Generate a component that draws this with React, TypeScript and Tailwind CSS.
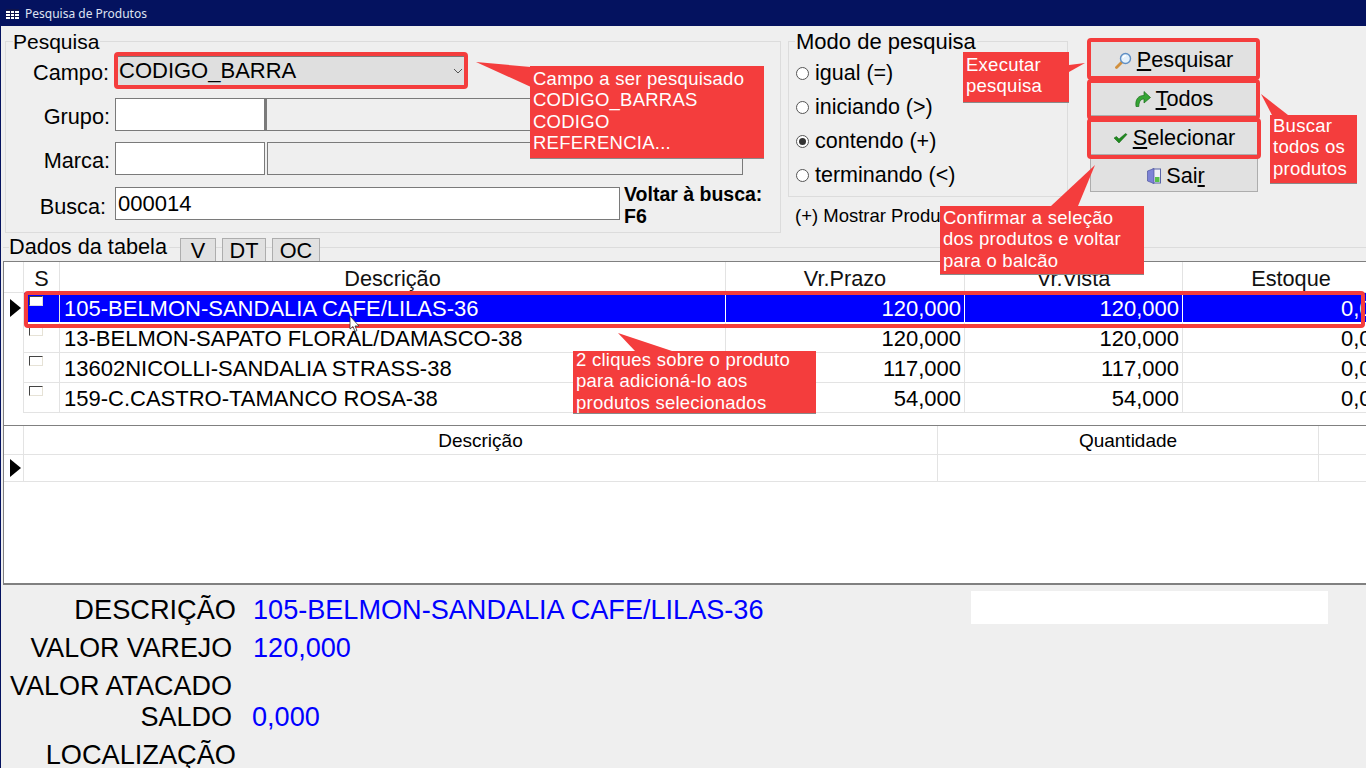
import React from 'react';

const Radio = ({ label, checked }: { label: string; checked?: boolean }) => (
  <div className="flex items-center h-[34px]">
    <span className="w-[13px] h-[13px] rounded-full border border-[#555] bg-white flex items-center justify-center">
      {checked && <span className="w-[7px] h-[7px] rounded-full bg-[#333]" />}
    </span>
    <span className="ml-[6px] text-[21.5px]">{label}</span>
  </div>
);

const ActionButton = ({ icon, children, className = 'h-[36px] pt-[2px]' }: { icon: React.ReactNode; children: React.ReactNode; className?: string }) => (
  <div className={`w-[168px] border border-[#adadad] bg-[#e1e1e1] flex items-center justify-center gap-[5px] text-[21.7px] ${className}`}>
    {icon}
    <span>{children}</span>
  </div>
);

const SearchIcon = () => (
  <svg width="17" height="17" viewBox="0 0 17 17">
    <path d="M1.5 15.5 L7 10" stroke="#d18f3c" strokeWidth="2.8" strokeLinecap="round" />
    <circle cx="10.5" cy="6.5" r="5" fill="#e4f1fb" stroke="#5f8fc4" strokeWidth="1.4" />
    <path d="M8 6 A3 3 0 0 1 11 3.6" fill="none" stroke="#fff" strokeWidth="1.2" />
  </svg>
);

const ArrowIcon = () => (
  <svg width="16" height="16" viewBox="0 0 16 16">
    <path d="M1 15.5 C0 8 3.5 4.5 9 4.5 V0.5 L15.5 6.5 L9 12 V8 C6 8 4 10 3.8 15.5 Z" fill="#35a535" stroke="#1a6f1a" strokeWidth="0.7" />
  </svg>
);

const CheckIcon = () => (
  <svg width="15" height="12" viewBox="0 0 15 12">
    <path d="M1 6 L3.5 4.5 L6 7 L12.5 1.5 L14 2.5 L6 11 Z" fill="#1f8a1f" stroke="#0f5f0f" strokeWidth="0.5" />
  </svg>
);

const DoorIcon = () => (
  <svg width="14" height="16" viewBox="0 0 14 16">
    <rect x="6" y="1" width="7.5" height="14" fill="#eef0f6" stroke="#5a64a8" />
    <rect x="8" y="9" width="4.5" height="5" fill="#58c04a" />
    <path d="M0.5 3 L7 0.5 V15.5 L0.5 13 Z" fill="#7d83d6" stroke="#4e559f" strokeWidth="0.7" />
  </svg>
);

const SelectedMark = () => (
  <span className="block w-0 h-0 border-y-[9px] border-y-transparent border-l-[11px] border-l-black" />
);

const rows = [
  { desc: '105-BELMON-SANDALIA CAFE/LILAS-36', prazo: '120,000', vista: '120,000' },
  { desc: '13-BELMON-SAPATO FLORAL/DAMASCO-38', prazo: '120,000', vista: '120,000' },
  { desc: '13602NICOLLI-SANDALIA STRASS-38', prazo: '117,000', vista: '117,000' },
  { desc: '159-C.CASTRO-TAMANCO ROSA-38', prazo: '54,000', vista: '54,000' },
];

const ProductRow = ({ row, active }: { row: (typeof rows)[number]; active: boolean }) => {
  const cell = active ? 'border-r border-white' : 'border-r border-[#e3e3e3]';
  return (
    <div className={`flex h-[30px] text-[22px] leading-[31px] ${active ? 'bg-[#0000ff] text-white border-b border-white' : 'border-b border-[#e3e3e3]'}`}>
      <div className="w-[36px] shrink-0 pl-[5px] pt-[3px] border-r border-[#e3e3e3]">
        <span className={`block w-[14px] h-[10px] border-t border-l border-[#444] border-r border-b ${active ? 'bg-white border-r-[#ddd] border-b-[#ddd]' : 'bg-white border-r-[#e6e2d6] border-b-[#e6e2d6]'}`} />
      </div>
      <div className={`w-[666px] shrink-0 pl-[4px] whitespace-nowrap ${cell}`}>{row.desc}</div>
      <div className={`w-[239px] shrink-0 pr-[3px] text-right ${cell}`}>{row.prazo}</div>
      <div className={`w-[218px] shrink-0 pr-[3px] text-right ${cell}`}>{row.vista}</div>
      <div className="w-[216px] shrink-0 pr-[3px] text-right">0,000</div>
    </div>
  );
};

const DetailRow = ({ label, value, height, labelClass }: { label: string; value?: string; height: string; labelClass: string }) => (
  <div className={`flex items-center ${height}`}>
    <div className={`shrink-0 text-right whitespace-nowrap ${labelClass}`}>{label}</div>
    {value && <div className="whitespace-nowrap text-[27.1px] text-[#0000ff]">{value}</div>}
  </div>
);

const Callout = ({ className, tail, children }: { className: string; tail: React.ReactNode; children: React.ReactNode }) => (
  <>
    {tail}
    <div className={`absolute bg-[#f43d3d] border-b border-[#8a8a8a] px-[3px] text-white text-[18.5px] leading-[21.3px] tracking-[0.25px] ${className}`}>{children}</div>
  </>
);

const Tail = ({ className, points, w, h }: { className: string; points: string; w: number; h: number }) => (
  <svg className={`absolute ${className}`} width={w} height={h} viewBox={`0 0 ${w} ${h}`}>
    <polygon points={points} fill="#f43d3d" />
  </svg>
);

export default function App() {
  return (
    <div className="relative w-[1366px] h-[768px] overflow-hidden bg-[#efefef] text-black font-['Liberation_Sans',Arial,sans-serif]">
      <div className="h-[26px] bg-[#04125f] flex items-center pl-[6px] pt-[1px] text-[12px] text-[#dfe3f2] font-['Noto_Sans',sans-serif]">
        <svg width="13" height="10" viewBox="0 0 13 10" className="mr-[6px]">
          <rect y="2" width="13" height="8" fill="#fff" />
          <rect width="13" height="2" fill="#10144a" />
          <path d="M0 4.5H13M0 7.5H13M4.5 2V10M8.5 2V10" stroke="#10144a" />
        </svg>
        Pesquisa de Produtos
      </div>

      <div className="border-l border-[#04125f] h-[742px]">
        {/* filtros */}
        <div className="flex items-start pt-[15px] h-[208px]">
          <div className="relative ml-[4px] w-[776px] h-[192px] border border-[#dcdcdc] text-[21.7px]">
            <span className="absolute left-[7px] top-[-12px] bg-[#efefef] text-[21px] leading-[24px] pr-[1px]">Pesquisa</span>
            <div className="flex items-center h-[31px] mt-[14px]">
              <span className="w-[103px] text-right pt-[3px]">Campo:</span>
              <div className="ml-[7px] w-[350px] h-[31px] bg-[#dfdfdf] border border-[#7a7a7a] flex items-center justify-between pl-[2px] pr-[2px] text-[22px] pb-[3px]">
                <span>CODIGO_BARRA</span>
                <svg width="10" height="6" viewBox="0 0 10 6" className="mt-[2px]"><path d="M1 1 L5 5 L9 1" fill="none" stroke="#555" /></svg>
              </div>
            </div>
            <div className="flex items-center h-[33px] mt-[11px]">
              <span className="w-[104px] text-right pt-[6px]">Grupo:</span>
              <div className="ml-[5px] w-[150px] h-[33px] bg-white border border-[#7a7a7a]" />
              <div className="w-[479px] h-[33px] border border-[#7a7a7a] border-l-2" />
            </div>
            <div className="flex items-center h-[33px] mt-[11px]">
              <span className="w-[104px] text-right pt-[6px]">Marca:</span>
              <div className="ml-[5px] w-[150px] h-[33px] bg-white border border-[#7a7a7a]" />
              <div className="ml-[2px] w-[476px] h-[33px] border border-[#7a7a7a]" />
            </div>
            <div className="flex items-start mt-[12px]">
              <span className="w-[100px] text-right h-[33px] leading-[39px]">Busca:</span>
              <div className="ml-[9px] w-[505px] h-[33px] bg-white border border-[#7a7a7a] pl-[2px] leading-[31px] text-[22px]">000014</div>
              <div className="ml-[4px] text-[19.5px] font-bold leading-[22px] whitespace-nowrap -mt-[4px]">
                Voltar à busca:<br />F6
              </div>
            </div>
          </div>

          <div className="ml-[7px] w-[280px]">
            <div className="relative h-[156px] border border-[#dcdcdc] pl-[7px] pt-[14px]">
              <span className="absolute left-[6px] top-[-12px] bg-[#efefef] text-[22px] leading-[24px] px-[1px] whitespace-nowrap">Modo de pesquisa</span>
              <Radio label="igual (=)" />
              <Radio label="iniciando (>)" />
              <Radio label="contendo (+)" checked />
              <Radio label="terminando (<)" />
            </div>
            <div className="pl-[7px] mt-[5px] text-[18.5px] whitespace-nowrap">(+) Mostrar Produtos</div>
          </div>

          <div className="ml-[22px] flex flex-col gap-[3px]">
            <ActionButton icon={<SearchIcon />}><u>P</u>esquisar</ActionButton>
            <ActionButton icon={<ArrowIcon />}><u>T</u>odos</ActionButton>
            <ActionButton icon={<CheckIcon />}><u>S</u>elecionar</ActionButton>
            <ActionButton icon={<DoorIcon />} className="h-[35px] -mt-[1px] pt-[3px] pl-[4px]">Sai<u>r</u></ActionButton>
          </div>
        </div>

        {/* abas */}
        <div className="relative h-[27px] flex items-end">
          <div className="absolute left-[2px] right-0 top-[13px] border-t border-[#dcdcdc]" />
          <span className="absolute left-[8px] top-[0px] bg-[#efefef] text-[21.7px] leading-[26px] pr-[2px]">Dados da tabela</span>
          <div className="relative ml-[179px] flex gap-[6px] text-[21.7px]">
            <div className="w-[36px] h-[23px] pt-[2px] bg-[#e1e1e1] border border-[#adadad] border-b-0 flex items-center justify-center">V</div>
            <div className="w-[44px] h-[23px] pt-[2px] bg-[#e1e1e1] border border-[#adadad] border-b-0 flex items-center justify-center">DT</div>
            <div className="w-[48px] h-[23px] pt-[2px] bg-[#e1e1e1] border border-[#adadad] border-b-0 flex items-center justify-center">OC</div>
          </div>
        </div>

        {/* tabela de produtos */}
        <div className="ml-[2px] h-[165px] bg-white border-y border-l border-[#808080] overflow-hidden flex">
          <div className="w-[20px] h-[151px] shrink-0 border-r border-[#e3e3e3]">
            <div className="h-[31px] border-b border-[#e3e3e3]" />
            <div className="h-[30px] flex items-center pl-[6px]"><SelectedMark /></div>
          </div>
          <div>
            <div className="flex h-[31px] text-[21.7px] leading-[34px] text-center text-[#111] border-b border-[#e3e3e3] whitespace-nowrap">
              <div className="w-[36px] shrink-0 border-r border-[#e3e3e3]">S</div>
              <div className="w-[666px] shrink-0 border-r border-[#e3e3e3]">Descrição</div>
              <div className="w-[239px] shrink-0 border-r border-[#e3e3e3]">Vr.Prazo</div>
              <div className="w-[218px] shrink-0 border-r border-[#e3e3e3]">Vr.Vista</div>
              <div className="w-[216px] shrink-0">Estoque</div>
            </div>
            {rows.map((row, i) => (
              <ProductRow key={row.desc} row={row} active={i === 0} />
            ))}
          </div>
        </div>

        {/* produtos selecionados */}
        <div className="ml-[2px] h-[159px] bg-white border-b-2 border-l border-[#808080] overflow-hidden flex">
          <div className="w-[20px] h-[56px] shrink-0 border-r border-[#e3e3e3]">
            <div className="h-[29px] border-b border-[#e3e3e3]" />
            <div className="h-[27px] border-b border-[#e3e3e3] flex items-center pl-[6px]"><SelectedMark /></div>
          </div>
          <div className="grow">
            <div className="flex h-[29px] text-[19px] leading-[29px] text-center border-b border-[#e3e3e3]">
              <div className="w-[914px] shrink-0 border-r border-[#e3e3e3]">Descrição</div>
              <div className="w-[381px] shrink-0 border-r border-[#e3e3e3]">Quantidade</div>
            </div>
            <div className="flex h-[27px] border-b border-[#e3e3e3]">
              <div className="w-[914px] shrink-0 border-r border-[#e3e3e3]" />
              <div className="w-[381px] shrink-0 border-r border-[#e3e3e3]" />
            </div>
          </div>
        </div>

        {/* detalhes */}
        <div className="flex items-start">
          <div className="pt-[6px] w-[970px]">
            <DetailRow label="DESCRIÇÃO" value="105-BELMON-SANDALIA CAFE/LILAS-36" height="h-[38px]" labelClass="w-[235px] mr-[17px] text-[27.2px]" />
            <DetailRow label="VALOR VAREJO" value="120,000" height="h-[38px]" labelClass="w-[231px] mr-[21px] text-[26.8px]" />
            <DetailRow label="VALOR ATACADO" height="h-[38px]" labelClass="w-[231px] mr-[21px] text-[27px]" />
            <DetailRow label="SALDO" value="0,000" height="h-[24px]" labelClass="w-[231px] mr-[20px] text-[27px]" />
            <DetailRow label="LOCALIZAÇÃO" height="h-[52px]" labelClass="w-[235px] text-[27.2px]" />
          </div>
          <div className="mt-[6px] w-[357px] h-[33px] bg-white" />
        </div>
      </div>

      {/* destaques e balões */}
      <div className="absolute left-[114px] top-[52px] w-[354px] h-[37px] border-4 border-[#f43d3d] rounded-[4px]" />
      <div className="absolute left-[1087px] top-[38px] w-[173px] h-[42px] border-4 border-[#f43d3d] rounded-[4px]" />
      <div className="absolute left-[1087px] top-[79px] w-[173px] h-[41px] border-4 border-[#f43d3d] rounded-[4px]" />
      <div className="absolute left-[1087px] top-[118px] w-[174px] h-[41px] border-4 border-[#f43d3d] rounded-[4px]" />
      <div className="absolute left-[24px] top-[291px] w-[1341px] h-[37px] border-4 border-[#f43d3d] rounded-[4px]" />

      <Callout
        className="left-[530px] top-[66px] w-[234px] h-[93px] pt-[2px]"
        tail={<Tail className="left-[475px] top-[61px]" w={56} h={27} points="1,1 56,6 56,26" />}
      >
        Campo a ser pesquisado<br />CODIGO_BARRAS<br />CODIGO<br />REFERENCIA...
      </Callout>
      <Callout
        className="left-[963px] top-[52px] w-[106px] h-[51px] pt-[2px]"
        tail={<Tail className="left-[1068px] top-[62px]" w={17} h={11} points="17,1 1,3 1,10" />}
      >
        Executar<br />pesquisa
      </Callout>
      <Callout
        className="left-[1270px] top-[115px] w-[87px] h-[69px]"
        tail={<Tail className="left-[1261px] top-[94px]" w={28} h={22} points="0,0 27,21 11,21" />}
      >
        Buscar<br />todos os<br />produtos
      </Callout>
      <Callout
        className="left-[940px] top-[206px] w-[204px] h-[69px] pt-[1px]"
        tail={<Tail className="left-[1050px] top-[165px]" w={46} h={42} points="45,0 1,41 28,41" />}
      >
        Confirmar a seleção<br />dos produtos e voltar<br />para o balcão
      </Callout>
      <Callout
        className="left-[573px] top-[351px] w-[243px] h-[63px]"
        tail={<Tail className="left-[618px] top-[333px]" w={55} h={19} points="0,0 54,18 17,18" />}
      >
        <div className="-mt-[2px]">2 cliques sobre o produto<br />para adicioná-lo aos<br />produtos selecionados</div>
      </Callout>

      <svg className="absolute left-[349px] top-[315px]" width="12" height="18" viewBox="0 0 12 18">
        <path d="M1 1 V14 L4 11.5 L6 16.5 L8 15.5 L6 11 H10 Z" fill="#fff" stroke="#333" strokeWidth="0.8" />
      </svg>
    </div>
  );
}
